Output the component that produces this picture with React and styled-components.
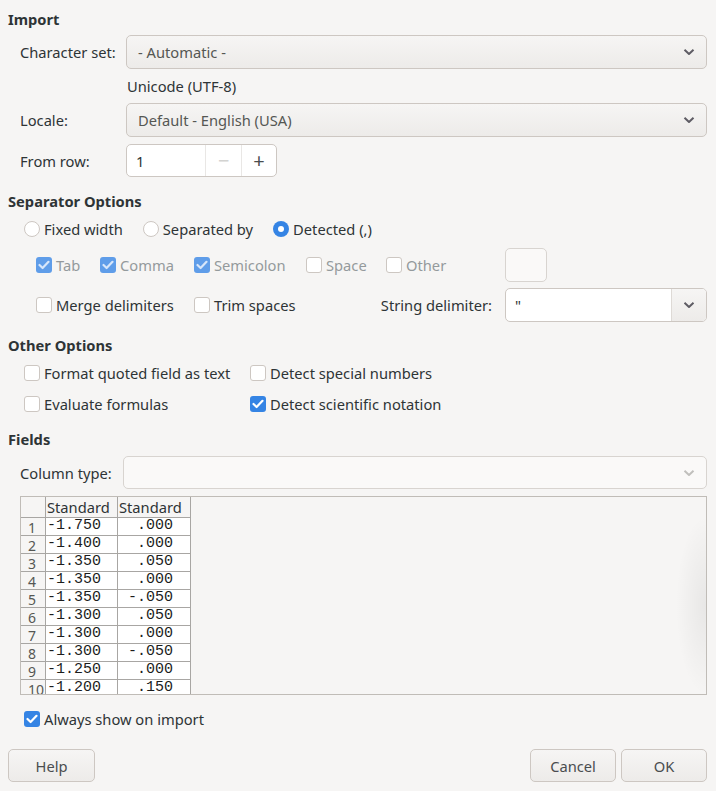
import React from 'react';
import styled, { createGlobalStyle, css } from 'styled-components';

const GlobalStyle = createGlobalStyle`
  body {
    margin: 0;
    background: #f6f5f4;
    font-family: "Noto Sans", "DejaVu Sans", sans-serif;
    font-size: 14.7px;
    color: #2e3436;
  }
`;

const Dialog = styled.div`
  display: flex;
  flex-direction: column;
  padding: 9px 9px 9px 8px;
  width: 716px;
  height: 791px;
  box-sizing: border-box;
`;

const Title = styled.div`
  font-weight: bold;
  height: 20px;
  line-height: 21px;
  margin-top: ${(p) => p.gap || 0}px;
`;

const Row = styled.div`
  display: flex;
  align-items: center;
  margin-top: ${(p) => p.gap || 0}px;
  padding-left: ${(p) => p.indent || 0}px;
`;

const Label = styled.div`
  width: ${(p) => p.width}px;
  flex: none;
  line-height: 20px;
`;

const Note = styled.div`
  height: 34px;
  display: flex;
  align-items: center;
  padding-left: 119px;
`;

const comboFace = css`
  border: 1px solid #cdc7c2;
  border-radius: 5px;
  box-sizing: border-box;
  background: linear-gradient(#f6f5f4, #edebe9);
`;

const Combo = styled.div`
  ${comboFace}
  flex: 1;
  height: ${(p) => p.h || 34}px;
  display: flex;
  align-items: center;
  justify-content: space-between;
  padding: 0 11px 0 11px;
  color: #555753;
  ${(p) =>
    p.disabled &&
    css`
      background: #faf9f8;
      border-color: #d8d4d0;
      color: #b5b5b3;
    `}
`;

const ChevronIcon = ({ color = '#5e5c64' }) => (
  <svg width="12" height="8" viewBox="0 0 12 8">
    <path d="M1.5 1.8 L6 6 L10.5 1.8" fill="none" stroke={color} strokeWidth="2" strokeLinejoin="round" />
  </svg>
);

const Spin = styled.div`
  display: flex;
  height: 33px;
  width: 151px;
  border: 1px solid #cdc7c2;
  border-radius: 5px;
  background: #fff;
  box-sizing: border-box;
  overflow: hidden;
`;

const SpinEntry = styled.div`
  width: 80px;
  padding-left: 9px;
  display: flex;
  align-items: center;
  box-sizing: border-box;
`;

const SpinButton = styled.div`
  width: 35px;
  border-left: 1px solid #e9e7e5;
  display: flex;
  align-items: center;
  justify-content: center;
  font-size: 20px;
  color: ${(p) => (p.disabled ? '#d3d3d1' : '#4a4d4f')};
`;

const RadioRow = styled.div`
  display: flex;
  gap: 20px;
  margin-top: 8px;
  padding-left: 16px;
  height: 20px;
  align-items: center;
`;

const Item = styled.label`
  display: flex;
  align-items: center;
  gap: 4px;
  line-height: 20px;
  white-space: nowrap;
  color: ${(p) => (p.disabled ? '#949a9c' : '#2e3436')};
  grid-column: ${(p) => p.col || 'auto'};
`;

const Radio = styled.span`
  width: 16px;
  height: 16px;
  border-radius: 50%;
  box-sizing: border-box;
  flex: none;
  display: flex;
  align-items: center;
  justify-content: center;
  ${(p) =>
    p.checked
      ? css`
          background: #3584e4;
          &::after {
            content: '';
            width: 6px;
            height: 6px;
            border-radius: 50%;
            background: #fff;
          }
        `
      : css`
          background: #fff;
          border: 1px solid #cdc7c2;
        `}
`;

const Box = styled.span`
  width: 16px;
  height: 16px;
  border-radius: 3px;
  box-sizing: border-box;
  flex: none;
  display: flex;
  align-items: center;
  justify-content: center;
  background: ${(p) => (p.checked ? (p.disabled ? '#5f9de9' : '#3584e4') : '#fff')};
  border: ${(p) => (p.checked ? 'none' : '1px solid #cdc7c2')};
`;

const Check = ({ checked, disabled }) => (
  <Box checked={checked} disabled={disabled}>
    {checked && (
      <svg width="12" height="10" viewBox="0 0 12 10">
        <path
          d="M1.5 5 L4.6 8 L10.5 1.8"
          fill="none"
          stroke={disabled ? '#d7e6fa' : '#fff'}
          strokeWidth="2.2"
          strokeLinecap="round"
          strokeLinejoin="round"
        />
      </svg>
    )}
  </Box>
);

const SepGrid = styled.div`
  display: grid;
  grid-template-columns: 64px 94px 112px 80px 119px 1fr;
  grid-auto-rows: 34px;
  row-gap: 6px;
  align-items: center;
  margin-top: 9px;
  padding-left: 28px;
`;

const SmallBox = styled.div`
  width: 42px;
  height: 34px;
  box-sizing: border-box;
  border: 1px solid #d8d4d0;
  border-radius: 5px;
  background: #faf9f8;
`;

const GridLabel = styled.div`
  grid-column: ${(p) => p.col};
  justify-self: end;
  padding-right: 13px;
`;

const EntryCombo = styled.div`
  display: flex;
  height: 34px;
  border: 1px solid #cdc7c2;
  border-radius: 5px;
  box-sizing: border-box;
  overflow: hidden;
  background: #fff;
`;

const EntryText = styled.div`
  flex: 1;
  padding-left: 9px;
  display: flex;
  align-items: center;
`;

const EntryButton = styled.div`
  width: 34px;
  border-left: 1px solid #dedad6;
  background: linear-gradient(#f6f5f4, #edebe9);
  display: flex;
  align-items: center;
  justify-content: center;
`;

const OptionsGrid = styled.div`
  display: grid;
  grid-template-columns: 226px 1fr;
  grid-auto-rows: 20px;
  row-gap: 11px;
  margin-top: 8px;
  padding-left: 16px;
`;

const Preview = styled.div`
  margin: 7px 0 0 12px;
  height: 199px;
  border: 1px solid #c0bcb7;
  box-sizing: border-box;
  overflow: hidden;
  background:
    radial-gradient(ellipse 30px 90px at 100% 55%, rgba(0, 0, 0, 0.06), rgba(0, 0, 0, 0)),
    #f6f5f4;
`;

const Sheet = styled.div`
  display: grid;
  grid-template-columns: 25px 72px 73px;
  grid-template-rows: 21px;
  grid-auto-rows: 18px;
  width: 170px;
`;

const Cell = styled.div`
  box-sizing: border-box;
  border-right: 1px solid #a8a6a3;
  border-bottom: 1px solid #a8a6a3;
  overflow: hidden;
  white-space: pre;
  ${(p) =>
    p.kind === 'head' &&
    css`
      background: #f6f5f4;
      line-height: 21px;
      padding-left: 1px;
      color: #2e3436;
    `}
  ${(p) =>
    p.kind === 'num' &&
    css`
      background: #f6f5f4;
      color: #555753;
      font-size: 14px;
      line-height: 16px;
      padding: 2px 0 0 7px;
    `}
  ${(p) =>
    p.kind === 'data' &&
    css`
      background: #fff;
      font-family: "Liberation Mono", "DejaVu Sans Mono", monospace;
      font-size: 15px;
      line-height: 15px;
      color: #1c1c1c;
      padding-left: 1px;
    `}
`;

const ButtonBar = styled.div`
  display: flex;
  gap: 5px;
  margin-top: 20px;
`;

const Button = styled.div`
  ${comboFace}
  width: ${(p) => p.w}px;
  height: 33px;
  display: flex;
  align-items: center;
  justify-content: center;
  color: #4a4d4f;
  margin-left: ${(p) => (p.push ? 'auto' : '0')};
`;

const rows = [
  ['-1.750', '  .000'],
  ['-1.400', '  .000'],
  ['-1.350', '  .050'],
  ['-1.350', '  .000'],
  ['-1.350', ' -.050'],
  ['-1.300', '  .050'],
  ['-1.300', '  .000'],
  ['-1.300', ' -.050'],
  ['-1.250', '  .000'],
  ['-1.200', '  .150'],
];

const App = () => (
  <>
    <GlobalStyle />
    <Dialog>
      <Title>Import</Title>
      <Row gap={6} indent={12}>
        <Label width={106}>Character set:</Label>
        <Combo>
          <span>- Automatic -</span>
          <ChevronIcon />
        </Combo>
      </Row>
      <Note>Unicode (UTF-8)</Note>
      <Row indent={12}>
        <Label width={106}>Locale:</Label>
        <Combo>
          <span>Default - English (USA)</span>
          <ChevronIcon />
        </Combo>
      </Row>
      <Row gap={7} indent={12}>
        <Label width={106}>From row:</Label>
        <Spin>
          <SpinEntry>1</SpinEntry>
          <SpinButton disabled>−</SpinButton>
          <SpinButton>+</SpinButton>
        </Spin>
      </Row>

      <Title gap={14}>Separator Options</Title>
      <RadioRow>
        <Item>
          <Radio />
          Fixed width
        </Item>
        <Item>
          <Radio />
          Separated by
        </Item>
        <Item>
          <Radio checked />
          Detected (,)
        </Item>
      </RadioRow>
      <SepGrid>
        <Item disabled>
          <Check checked disabled />
          Tab
        </Item>
        <Item disabled>
          <Check checked disabled />
          Comma
        </Item>
        <Item disabled>
          <Check checked disabled />
          Semicolon
        </Item>
        <Item disabled>
          <Check />
          Space
        </Item>
        <Item disabled>
          <Check />
          Other
        </Item>
        <SmallBox />
        <Item col="1 / 3">
          <Check />
          Merge delimiters
        </Item>
        <Item col="3 / 4">
          <Check />
          Trim spaces
        </Item>
        <GridLabel col="4 / 6">String delimiter:</GridLabel>
        <EntryCombo>
          <EntryText>"</EntryText>
          <EntryButton>
            <ChevronIcon />
          </EntryButton>
        </EntryCombo>
      </SepGrid>

      <Title gap={13}>Other Options</Title>
      <OptionsGrid>
        <Item>
          <Check />
          Format quoted field as text
        </Item>
        <Item>
          <Check />
          Detect special numbers
        </Item>
        <Item>
          <Check />
          Evaluate formulas
        </Item>
        <Item>
          <Check checked />
          Detect scientific notation
        </Item>
      </OptionsGrid>

      <Title gap={15}>Fields</Title>
      <Row gap={7} indent={12}>
        <Label width={103}>Column type:</Label>
        <Combo disabled h={33}>
          <span />
          <ChevronIcon color="#c0bfbc" />
        </Combo>
      </Row>
      <Preview>
        <Sheet>
          <Cell kind="head" />
          <Cell kind="head">Standard</Cell>
          <Cell kind="head">Standard</Cell>
          {rows.map(([a, b], i) => (
            <React.Fragment key={i}>
              <Cell kind="num">{i + 1}</Cell>
              <Cell kind="data">{a}</Cell>
              <Cell kind="data">{b}</Cell>
            </React.Fragment>
          ))}
        </Sheet>
      </Preview>

      <Row gap={14} indent={16}>
        <Item>
          <Check checked />
          Always show on import
        </Item>
      </Row>

      <ButtonBar>
        <Button w={87}>Help</Button>
        <Button w={86} push>
          Cancel
        </Button>
        <Button w={86}>OK</Button>
      </ButtonBar>
    </Dialog>
  </>
);

export default App;
